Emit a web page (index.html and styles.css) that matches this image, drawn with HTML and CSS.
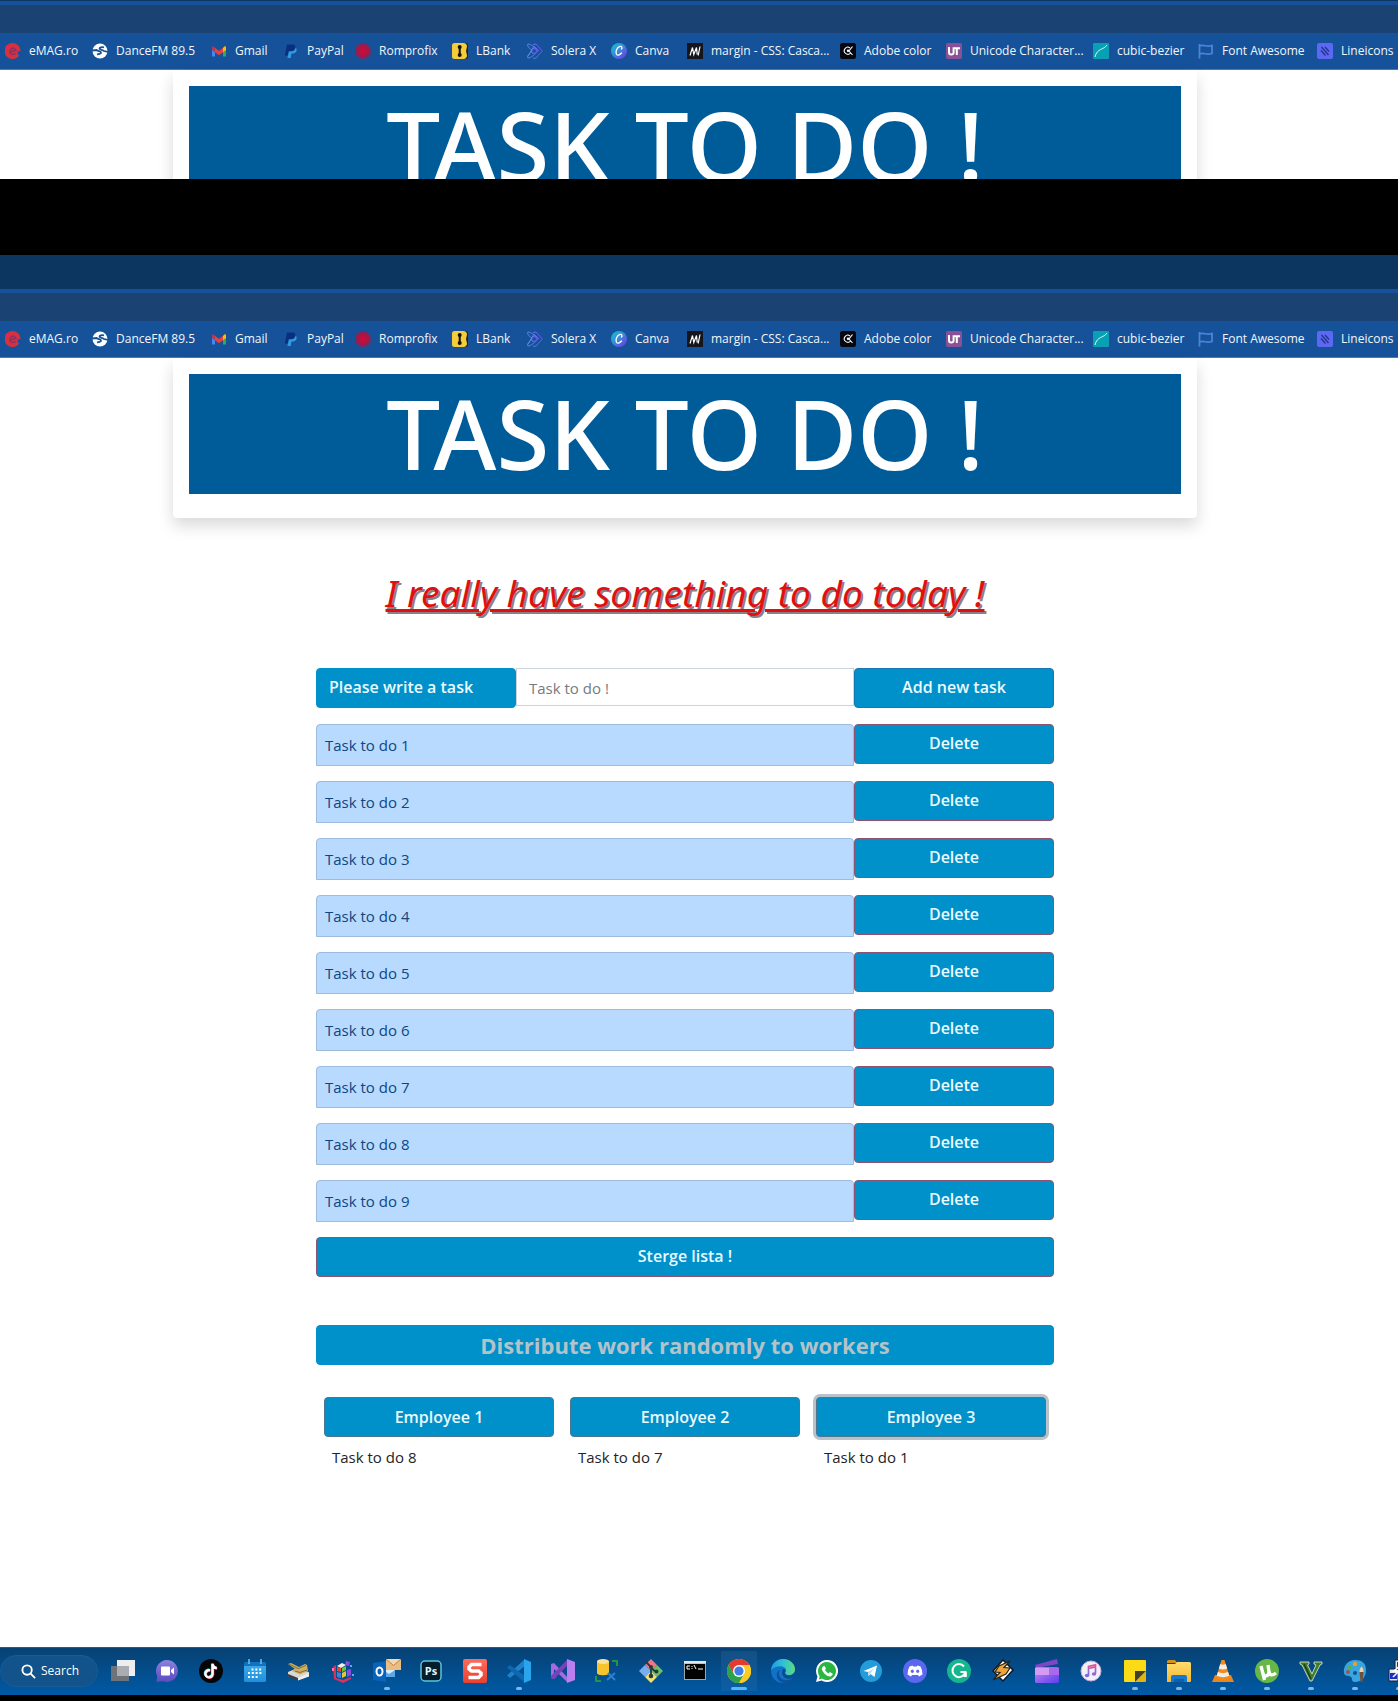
FILE: index.html
```html
<!DOCTYPE html>
<html lang="en">
<head>
<meta charset="utf-8">
<title>Task to do</title>
<meta name="viewport" content="width=device-width, initial-scale=1">
<link rel="stylesheet" href="styles.css">
</head>
<body>
<svg class="sprite" aria-hidden="true">
  <defs>
    <linearGradient id="gCanva" x1="0" y1="0" x2="1" y2="1"><stop offset="0" stop-color="#12c6cf"/><stop offset=".5" stop-color="#3c86dc"/><stop offset="1" stop-color="#7a2de0"/></linearGradient>
    <radialGradient id="gRom"><stop offset="0" stop-color="#d00a3a"/><stop offset=".6" stop-color="#ab1545"/><stop offset="1" stop-color="#6f2c62"/></radialGradient>
    <linearGradient id="gSol"><stop offset="0" stop-color="#5a8be0"/><stop offset="1" stop-color="#6a55f0"/></linearGradient>
    <linearGradient id="gChat" x1="0" y1="0" x2="0" y2="1"><stop offset="0" stop-color="#8d82e0"/><stop offset="1" stop-color="#5a4bc0"/></linearGradient>
    <linearGradient id="gEdge" x1="0" y1="0" x2="1" y2="0"><stop offset="0" stop-color="#1f9be0"/><stop offset=".5" stop-color="#2fc0d8"/><stop offset="1" stop-color="#5fdc78"/></linearGradient>
    <linearGradient id="gClip" x1="0" y1="0" x2="1" y2="1"><stop offset="0" stop-color="#c586f0"/><stop offset="1" stop-color="#5a3ff0"/></linearGradient>
    <linearGradient id="gTunes" x1="0" y1="0" x2="0" y2="1"><stop offset="0" stop-color="#f0508c"/><stop offset="1" stop-color="#5a78f0"/></linearGradient>
    <linearGradient id="gFold" x1="0" y1="0" x2="0" y2="1"><stop offset="0" stop-color="#ffdc6c"/><stop offset="1" stop-color="#f7b733"/></linearGradient>
    <linearGradient id="gCal" x1="0" y1="0" x2="0" y2="1"><stop offset="0" stop-color="#38a8ea"/><stop offset="1" stop-color="#2090dc"/></linearGradient>
    <linearGradient id="gSnag" x1="0" y1="0" x2="0" y2="1"><stop offset="0" stop-color="#ff6a5c"/><stop offset="1" stop-color="#e8402e"/></linearGradient>
  </defs>
  <symbol id="b-emag" viewBox="0 0 16 16"><circle cx="7.500" cy="8" r="8" fill="#d93040"/><path d="M5 9.300 11 7.300C10.300 5.500 8.500 4.800 7 5.500 5 6.400 4.400 8.600 5.300 10.200c1.200 1.800 3.600 1.700 5.400.3" fill="none" stroke="#8a3260" stroke-width="1.500"/><path d="m12.500 8.500 3.500-.5v3.500l-3 .5z" fill="#15529a"/></symbol>
  <symbol id="b-dance" viewBox="0 0 16 16"><circle cx="8" cy="8" r="7.500" fill="#fff"/><path d="M0 7.500 4.500 7C6 8.500 9 8 9 9.500S7 11 5 11.500M16 9l-4-1C11 6.500 7.500 7 7.500 5.600S9.500 4 12 4.300" fill="none" stroke="#14529a" stroke-width="1.800"/></symbol>
  <symbol id="b-gmail" viewBox="0 0 16 16"><path d="M1 4v9.500h3V7z" fill="#4285f4"/><path d="M15 4v9.500h-3V7z" fill="#34a853"/><path d="M1 4.500V7l3 2.300V4.800L2.500 3.200C1.500 3 1 3.700 1 4.500z" fill="#b8384c"/><path d="M4 4.800 8 8l4-3.200v4.500L8 12.300 4 9.300z" fill="#ea4335"/><path d="M12 4.800 13.500 3.200C14.500 3 15 3.700 15 4.500V7l-3 2.300z" fill="#fbbc04"/></symbol>
  <symbol id="b-paypal" viewBox="0 0 16 16"><path d="M5.500 4.500h6c3 0 3 5.500-1 6H8.500L7.700 15H4.500z" fill="#2f9be0"/><path d="M4 1.500h6c3.500 0 3.500 6.500-1.500 6.800H5.800L5 12.500H1.800z" fill="#0b2f80"/></symbol>
  <symbol id="b-rom" viewBox="0 0 16 16"><circle cx="8" cy="8" r="8" fill="url(#gRom)"/></symbol>
  <symbol id="b-lbank" viewBox="0 0 16 16"><rect x="2.500" width="13.500" height="16" rx="2.500" fill="#2a2418"/><path d="M2.500 0h9c2 0 3.500 1.500 3.500 3.500L14 8l1 4.500c0 2-1.500 3.500-3.500 3.500h-9A2.500 2.500 0 0 1 0 13.500v-11A2.500 2.500 0 0 1 2.500 0z" fill="#f5cd3c"/><path d="M7.700 4v8" stroke="#14110a" stroke-width="2"/><circle cx="7.700" cy="4" r="2" fill="#14110a"/><circle cx="7.700" cy="12" r="2" fill="#14110a"/></symbol>
  <symbol id="b-solera" viewBox="0 0 16 16"><g fill="none" stroke="url(#gSol)" stroke-width="1"><path d="M6 1.500 9 1l6.300 7L9 15.200H6M1 1c4 0 10 7 10 7s-6 7-10 7c-2-2 4-6 4-7S-1 3 1 1zM1 13l6-10 5 5"/><circle cx="7" cy="8" r="2.500"/></g></symbol>
  <symbol id="b-canva" viewBox="0 0 16 16"><circle cx="8" cy="8" r="8" fill="url(#gCanva)"/><path d="M10.500 6c1.200-1.500.2-3-1.500-2.600C6 4.300 4 9 5.500 11.300c1.300 1.700 3.600.5 5-1.300" fill="none" stroke="#fff" stroke-width="1.300" stroke-linecap="round"/></symbol>
  <symbol id="b-mdn" viewBox="0 0 16 16"><path d="M0 0h16v16H0z" fill="#15151c"/><path d="M3 12.500 5.500 4.500l1.300 7 2.700-7 .7 7M13 3.500l-1.800 9" fill="none" stroke="#fff" stroke-width="1.200"/></symbol>
  <symbol id="b-adobe" viewBox="0 0 16 16"><rect width="16" height="16" rx="2.500" fill="#06070f"/><path d="M12.500 3.500 9 8l3.500 4M10.500 10A3.500 3.500 0 1 1 10 5" fill="none" stroke="#fff" stroke-width="1.100"/><circle cx="8" cy="7.800" r="1.200" fill="#fff"/></symbol>
  <symbol id="b-ut" viewBox="0 0 16 16"><rect width="16" height="16" rx="2" fill="#8a5296"/><path d="M3 4v5.500Q3 11.500 5.300 11.500T7.600 9.500V5.200H14M10.800 5v7" fill="none" stroke="#fff" stroke-width="2"/></symbol>
  <symbol id="b-cubic" viewBox="0 0 16 16"><rect width="16" height="16" rx="1" fill="#0aa0b4"/><path d="M2 14C4 5 11 7 14 2" fill="none" stroke="#d8f8fa" stroke-width="1"/></symbol>
  <symbol id="b-fa" viewBox="0 0 16 16"><path d="M1.500 1v14.500M1.500 3c5-2 6 1.500 12.500-.5v8C8 12.500 6.500 9 1.500 11" fill="none" stroke="#4a86dc" stroke-width="1.700"/></symbol>
  <symbol id="b-line" viewBox="0 0 16 16"><rect width="16" height="16" rx="2" fill="#5a68f2"/><path d="m4 7.500 4.500 5M4.500 4l7 8M8 4l4 4.500" stroke="#25338f" stroke-width="1.300"/></symbol>

  <symbol id="t-view" viewBox="0 0 24 24"><path d="M6 1h18v16H6z" fill="#eceef0"/><path d="M0 7h18v15H0z" fill="#6f7378"/><path d="M6 7h12v10H6z" fill="#a9acb0"/></symbol>
  <symbol id="t-chat" viewBox="0 0 24 24"><path d="M12 1a11 11 0 1 1-4 21.300L1.500 23l.7-6A11 11 0 0 1 12 1z" fill="url(#gChat)"/><rect x="6" y="7.500" width="9" height="9" rx="1" fill="#fff"/><path d="m16 11 3-2.500v7L16 13z" fill="#fff"/></symbol>
  <symbol id="t-tiktok" viewBox="0 0 24 24"><circle cx="12" cy="12" r="12" fill="#050505"/><g fill="none" stroke-width="2.400"><path d="M10.500 10.800a3.600 3.600 0 1 0 2.600 3.700V4.500c.3 2.500 2 4 4.200 4" stroke="#25e0e0"/><path d="M11.500 11.800a3.600 3.600 0 1 0 2.600 3.700V5.500c.3 2.500 2 4 4.200 4" stroke="#f02c56"/><path d="M11 11.300a3.600 3.600 0 1 0 2.600 3.700V5c.3 2.500 2 4 4.200 4" stroke="#fff"/></g></symbol>
  <symbol id="t-cal" viewBox="0 0 24 24"><path d="M1 4.500Q1 3 2.500 3h19Q23 3 23 4.500V7H1z" fill="#1471bd"/><path d="M1 7h22v14.500q0 1.500-1.500 1.500h-19Q1 23 1 21.500z" fill="url(#gCal)"/><path d="M6 0v5M18 0v5" stroke="#63c5f5" stroke-width="1.500"/><path d="M8.500 10.500h11M5 14h14.500M5 18h11" stroke="#fff" stroke-width="2" stroke-dasharray="2 1.800"/></symbol>
  <symbol id="t-scan" viewBox="0 0 24 24"><path d="m1 13 7-3 14 3v4l-11 4-10-4z" fill="#d9d8d4"/><path d="m1 15 10 4v2.500l-10-4z" fill="#3b3f45"/><path d="m11 19 11-5v3.500l-11 4z" fill="#f0efeb"/><path d="m1 5 3-1 8 4 6-3 2 1 1 6-8 3.500L5 12l3-2z" fill="#cdaf68"/><path d="m2 5 9 4.500 8-3M8 12l5 1.500 7-2.500" fill="none" stroke="#8c6d2e"/></symbol>
  <symbol id="t-cube" viewBox="0 0 24 24"><path d="m2 8 3-2v13l7 2 8-3v2l-8 4-9-4z" fill="#d8335f"/><path d="m6 7 5-3 4 2-5 3z" fill="#f4efe6"/><path d="m6 8 4 1v4l-4-1z" fill="#e04a3a"/><path d="m11 9 4-2v4l-4 2z" fill="#65c43d"/><path d="m6 13 4 1v5l-4-1z" fill="#3f7fe0"/><path d="m11 14 4-2v5l-4 2z" fill="#f2c422"/><path d="m16 11 4-1v6l-4 2z" fill="#8b4be0"/><path d="m15 2 4 1-1 4-4-1z" fill="#8a4be5"/><path d="M1 9h2v3H1z" fill="#ff7a9a"/><path d="M19 6h2v2h-2zM21 15h2v2h-2z" fill="#5ca8ff"/></symbol>
  <symbol id="t-outlook" viewBox="0 0 28 24"><path d="M10 6h12v12H10z" fill="#dfecf8"/><path d="m10 11 6 4 6-4v7H10z" fill="#58a7e8"/><path d="M0 4 13 2v21L0 21z" fill="#0a63bb"/><ellipse cx="6.500" cy="12.500" rx="3" ry="4" fill="none" stroke="#fff" stroke-width="2"/><path d="M13 0h15v11H13z" fill="#e9bd83"/><path d="m13 0 7.500 6.500L28 0" fill="#f6d7a9" stroke="#b98245"/></symbol>
  <symbol id="t-ps" viewBox="0 0 24 24"><rect x="2" y="2" width="20" height="20" rx="4" fill="#061e2b" stroke="#5cc5dc" stroke-width="1.500"/><text x="12" y="16" class="ps-text">Ps</text></symbol>
  <symbol id="t-snag" viewBox="0 0 24 24"><rect width="24" height="24" rx="2" fill="url(#gSnag)"/><path d="M18.500 5.500H8.500L6 8v2l2.500 2h7l2.500 2v2l-2.500 2.500H5.500" fill="none" stroke="#fff" stroke-width="3.500"/></symbol>
  <symbol id="t-code" viewBox="0 0 24 24"><path d="M18 0v7L3 19l-3-2.500z" fill="#1d83cb"/><path d="M18 24v-7L3 6 0 8.500z" fill="#0d68ae"/><path d="m17 0 7 3v18l-7 3z" fill="#2ba4ee"/></symbol>
  <symbol id="t-vs" viewBox="0 0 24 24"><path d="m0 5 3-1 14 15v5L3 10v6l2 2-2 2-3-1z" fill="#a76ae0"/><path d="M17 0v6L3 20l-3-1v-2z" fill="#7a41ba"/><path d="m16 0 8 3v18l-8 3z" fill="#b97ff0"/></symbol>
  <symbol id="t-db" viewBox="0 0 24 24"><path d="M2 2v12c0 3 12 3 12 0V2z" fill="#f6c52d"/><ellipse cx="8" cy="2.500" rx="6" ry="2.500" fill="#fbe29a"/><path d="M17 2h5v5M1 17v5h5" fill="none" stroke="#279444" stroke-width="2"/><path d="m12 21 8-7M13 14l7 7" stroke="#2c80ce" stroke-width="2"/></symbol>
  <symbol id="t-git" viewBox="0 0 24 24"><path d="m12 0 6 6-6 6-6-6z" fill="#ec7982"/><path d="m6 6 6 6-6 6-6-6z" fill="#76aef0"/><path d="m18 6 6 6-6 6-6-6z" fill="#73bf68"/><path d="m12 12 6 6-6 6-6-6z" fill="#f4e06f"/><path d="m7 3 5 5v9M12 9l5 4" fill="none" stroke="#253b42" stroke-width="1.800"/><circle cx="12" cy="8" r="2" fill="#253b42"/><circle cx="12" cy="17" r="2.300" fill="#253b42"/><circle cx="17.500" cy="12.500" r="2" fill="#253b42"/></symbol>
  <symbol id="t-cmd" viewBox="0 0 24 24"><path d="M1 2h22v19H1z" fill="#9aa5ad"/><path d="M2 5h20v15H2z" fill="#030303"/><path d="M1 2h22v2.500H1z" fill="#e4e7e9"/><path d="M7 7H4v3h3M9 7v1M9 9v1M11 6l2 4M15 10h5" fill="none" stroke="#fff"/></symbol>
  <symbol id="t-chrome" viewBox="0 0 24 24"><circle cx="12" cy="12" r="12" fill="#f7c91f"/><path d="M1.600 6A12 12 0 0 1 22.400 6H12l-5.200 9z" fill="#e33b2e"/><path d="M1.600 6A12 12 0 0 0 12 24l5.200-9H6.800z" fill="#2ba24c"/><path d="M12 6h10.400A12 12 0 0 1 12 24l5.200-9z" fill="#fbcb21"/><circle cx="12" cy="12" r="6" fill="#fff"/><circle cx="12" cy="12" r="4.600" fill="#3d7de8"/></symbol>
  <symbol id="t-edge" viewBox="0 0 24 24"><circle cx="12" cy="12" r="12" fill="#1272c8"/><path d="M0 11C1 4 6 0 12 0c7 0 12 5 12 10 0 4-3 6-6 6-4 0-5-2-3.500-3.500C17 8 8 4 0 11z" fill="url(#gEdge)"/><path d="M9 11c-3 4 0 10 6 10 3 0 5-1 7-2-3 5-8 6-12 4-5-3-6-10-1-12z" fill="#0d519b"/><path d="M14.500 12.500C13 15 16 17 18 16.500c3 0 5-2 6-4 .3 3-1 5-2 6.500-8 3-13-3-10-9 2 0 3 1 2.500 2.500z" fill="#084e8b"/></symbol>
  <symbol id="t-wa" viewBox="0 0 24 24"><path d="M12 1a11 11 0 1 1-5.500 20.500L1 23l1.500-5.500A11 11 0 0 1 12 1z" fill="#fff"/><path d="M12 3a9 9 0 1 1-5 16.500l-3.200 1 .9-3.200A9 9 0 0 1 12 3z" fill="#29b741"/><path d="m8.500 7-1.700 2c0 4 5 9 9 8.500L18 15l-3-2-1.500 1.500Q11 13 10 10.800L11 9.500 9.500 7z" fill="#fff"/></symbol>
  <symbol id="t-tg" viewBox="0 0 24 24"><circle cx="12" cy="12" r="11" fill="#259cda"/><path d="m4.500 12 13.500-5.500L15.500 18l-4-3-2 2-.5-4z" fill="#fff"/><path d="m9 13 6.500-4-4 5-2 3z" fill="#b6d9ec"/></symbol>
  <symbol id="t-disc" viewBox="0 0 24 24"><circle cx="12" cy="12" r="12" fill="#5c67f0"/><path d="m6.500 7.500 3-1 .7 1h3.600l.7-1 3 1q2 3.500 2 8l-3.500 2-1-1.500H9L8 17.500l-3.500-2q0-4.500 2-8z" fill="#fff"/><ellipse cx="9.300" cy="12.300" rx="1.500" ry="1.800" fill="#5c67f0"/><ellipse cx="14.700" cy="12.300" rx="1.500" ry="1.800" fill="#5c67f0"/></symbol>
  <symbol id="t-gram" viewBox="0 0 24 24"><circle cx="12" cy="12" r="12" fill="#15b58e"/><path d="M17 7.500A6.500 6.500 0 1 0 18.300 13H13.500M16.500 17h2.300v-4" fill="none" stroke="#fff" stroke-width="2"/></symbol>
  <symbol id="t-winamp" viewBox="0 0 24 24"><path d="m12 1 10 10-10 11L2 12z" fill="#fff" stroke="#16191c" stroke-width="1.500"/><path d="M19 2 8 7l-4 6 5 .5L2 21l13-6 4-6-6-.5z" fill="#eba637" stroke="#272219" stroke-width="1.200"/></symbol>
  <symbol id="t-clip" viewBox="0 0 24 24"><path d="m0 6 22-6 1 5L1 9z" fill="#7f45c8"/><rect y="8" width="24" height="16" rx="1.500" fill="url(#gClip)"/><path d="M0 9h14v7H0z" fill="#d59af2"/><path d="M14 9h10v7H14z" fill="#a869ed"/></symbol>
  <symbol id="t-tunes" viewBox="0 0 24 24"><circle cx="12" cy="12" r="10" fill="#f4eef8" stroke="#c6aedc"/><path d="M9.500 16V7.500l7-1.700v8.700M9.500 9.500l7-1.700" fill="none" stroke="url(#gTunes)" stroke-width="1.700"/><ellipse cx="8" cy="16.500" rx="2.200" ry="1.800" fill="#6c70e8"/><ellipse cx="15" cy="15" rx="2.200" ry="1.800" fill="#8a68dc"/></symbol>
  <symbol id="t-note" viewBox="0 0 24 24"><path d="M2 1h20q1 0 1 1v10L12 23H2q-1 0-1-1V2q0-1 1-1z" fill="#fbdb16"/><path d="M12 12h11L12 23z" fill="#40402f"/><path d="M23 12v10q0 1-1 1H12z" fill="#e6b40d"/></symbol>
  <symbol id="t-folder" viewBox="0 0 24 24"><path d="M0 2.500Q0 1 1.500 1H8l2 3H0z" fill="#d49314"/><path d="M0 5h8l2-2h12.500Q24 3 24 4.500V22q0 1-1 1H0z" fill="url(#gFold)"/><path d="M4 23v-5q0-2 2-2h12q2 0 2 2v5z" fill="#1678cd"/><path d="M7 20h10v3H7z" fill="#0f5fae"/></symbol>
  <symbol id="t-vlc" viewBox="0 0 24 24"><path d="M4 16h16l3 7H1z" fill="#ed851b"/><path d="M10.500 1h3L19 19Q12 23 5 19z" fill="#f28a1d"/><path d="m9.300 5-1.500 4.500q4 2 8.400 0L14.700 5q-3 1.300-5.400 0zM6.900 13l-1.200 3.800q6.300 2.800 12.600 0L17.100 13q-5 2.300-10.200 0z" fill="#f1eee8"/></symbol>
  <symbol id="t-mu" viewBox="0 0 24 24"><circle cx="12" cy="12" r="12" fill="#67b746"/><path d="m6 7 3.500 14M8 14c1 5 6 3 6-1l-1-7M14 13c1 3.500 3 4 7 1" fill="none" stroke="#fff" stroke-width="3.300"/></symbol>
  <symbol id="t-v" viewBox="0 0 24 24"><path d="M1 3h9v2L8.500 6 13 15l4-9-2-1V3h8v2l-2 1-8 16h-2L3 6 1 5z" fill="#3f7d2a" stroke="#c9d2c2" stroke-width="1"/><path d="m5 5 7 15" stroke="#16401c" stroke-width="1.500"/></symbol>
  <symbol id="t-paint" viewBox="0 0 24 24"><path d="M12 1C4 1 0 8 1 14c1 4 5 2 7 4s0 5 4 5c7 0 11-5 11-12S19 1 12 1z" fill="#38a5df"/><circle cx="12" cy="5" r="2.200" fill="#e0a13a"/><circle cx="7" cy="8" r="2.200" fill="#5cae4a"/><circle cx="5" cy="13" r="2" fill="#a5524a"/><circle cx="12" cy="14" r="2" fill="#12508f"/><path d="M16.500 13q0-4 2-5.500 2 1.500 2 5.500z" fill="#ead2ac"/><path d="M16.500 13h4l-1 10h-2z" fill="#71513a"/></symbol>
  <symbol id="t-pc" viewBox="0 0 24 24"><path d="M8 1h15v13H8z" fill="#e5e5e5" stroke="#171d3f"/><path d="M10 3h11v8H10z" fill="#1930bd"/><path d="M2 10h9v12H2z" fill="#e5e5e5" stroke="#171d3f"/><path d="M3 14h7v6H3z" fill="#1930bd"/><path d="m14 6-7 6h5l-6 6" fill="none" stroke="#fff" stroke-width="1.500"/></symbol>
</svg>

<div class="capture capture-cut">
  <div class="tabs tabs-cut"></div>
  <div class="address"></div>
  <nav class="bookmarks" aria-label="Bookmarks, first window">
    <a href="#"><svg><use href="#b-emag"/></svg>eMAG.ro</a>
    <a href="#"><svg><use href="#b-dance"/></svg>DanceFM 89.5</a>
    <a href="#"><svg><use href="#b-gmail"/></svg>Gmail</a>
    <a href="#"><svg><use href="#b-paypal"/></svg>PayPal</a>
    <a href="#"><svg><use href="#b-rom"/></svg>Romprofix</a>
    <a href="#"><svg><use href="#b-lbank"/></svg>LBank</a>
    <a href="#"><svg><use href="#b-solera"/></svg>Solera X</a>
    <a href="#"><svg><use href="#b-canva"/></svg>Canva</a>
    <a href="#"><svg><use href="#b-mdn"/></svg>margin - CSS: Casca...</a>
    <a href="#"><svg><use href="#b-adobe"/></svg>Adobe color</a>
    <a href="#"><svg><use href="#b-ut"/></svg>Unicode Character...</a>
    <a href="#"><svg><use href="#b-cubic"/></svg>cubic-bezier</a>
    <a href="#"><svg><use href="#b-fa"/></svg>Font Awesome</a>
    <a href="#"><svg><use href="#b-line"/></svg>Lineicons</a>
  </nav>
  <div class="page">
    <header class="banner"><h1>TASK TO DO !</h1></header>
  </div>
</div>

<div class="capture capture-full">
  <div class="tabs"></div>
  <div class="address"></div>
  <nav class="bookmarks" aria-label="Bookmarks, second window">
    <a href="#"><svg><use href="#b-emag"/></svg>eMAG.ro</a>
    <a href="#"><svg><use href="#b-dance"/></svg>DanceFM 89.5</a>
    <a href="#"><svg><use href="#b-gmail"/></svg>Gmail</a>
    <a href="#"><svg><use href="#b-paypal"/></svg>PayPal</a>
    <a href="#"><svg><use href="#b-rom"/></svg>Romprofix</a>
    <a href="#"><svg><use href="#b-lbank"/></svg>LBank</a>
    <a href="#"><svg><use href="#b-solera"/></svg>Solera X</a>
    <a href="#"><svg><use href="#b-canva"/></svg>Canva</a>
    <a href="#"><svg><use href="#b-mdn"/></svg>margin - CSS: Casca...</a>
    <a href="#"><svg><use href="#b-adobe"/></svg>Adobe color</a>
    <a href="#"><svg><use href="#b-ut"/></svg>Unicode Character...</a>
    <a href="#"><svg><use href="#b-cubic"/></svg>cubic-bezier</a>
    <a href="#"><svg><use href="#b-fa"/></svg>Font Awesome</a>
    <a href="#"><svg><use href="#b-line"/></svg>Lineicons</a>
  </nav>
  <main class="page">
    <header class="banner"><h1>TASK TO DO !</h1></header>
    <h2 class="tagline">I really have something to do today !</h2>
    <div class="board">
      <form class="row entry">
        <label class="prompt" for="task">Please write a task</label>
        <input class="field" id="task" type="text" placeholder="Task to do !">
        <button class="btn btn-add" type="button">Add new task</button>
      </form>
      <ul class="tasks">
        <li class="row"><span class="task">Task to do 1</span><button class="btn btn-danger" type="button">Delete</button></li>
        <li class="row"><span class="task">Task to do 2</span><button class="btn btn-danger" type="button">Delete</button></li>
        <li class="row"><span class="task">Task to do 3</span><button class="btn btn-danger" type="button">Delete</button></li>
        <li class="row"><span class="task">Task to do 4</span><button class="btn btn-danger" type="button">Delete</button></li>
        <li class="row"><span class="task">Task to do 5</span><button class="btn btn-danger" type="button">Delete</button></li>
        <li class="row"><span class="task">Task to do 6</span><button class="btn btn-danger" type="button">Delete</button></li>
        <li class="row"><span class="task">Task to do 7</span><button class="btn btn-danger" type="button">Delete</button></li>
        <li class="row"><span class="task">Task to do 8</span><button class="btn btn-danger" type="button">Delete</button></li>
        <li class="row"><span class="task">Task to do 9</span><button class="btn btn-danger" type="button">Delete</button></li>
      </ul>
      <button class="btn btn-danger" type="button">Sterge lista !</button>
      <button class="btn btn-share" type="button">Distribute work randomly to workers</button>
      <div class="workers">
        <div class="worker"><button class="btn btn-worker" type="button">Employee 1</button><p>Task to do 8</p></div>
        <div class="worker"><button class="btn btn-worker" type="button">Employee 2</button><p>Task to do 7</p></div>
        <div class="worker"><button class="btn btn-worker is-focused" type="button">Employee 3</button><p>Task to do 1</p></div>
      </div>
    </div>
  </main>
  <footer class="taskbar">
    <button class="search" type="button"><svg viewBox="0 0 16 16"><circle cx="6.500" cy="6.500" r="5"/><path d="m10 10 5 5"/></svg>Search</button>
    <button class="app" type="button" aria-label="Task view"><svg><use href="#t-view"/></svg></button>
    <button class="app" type="button" aria-label="Chat"><svg><use href="#t-chat"/></svg></button>
    <button class="app" type="button" aria-label="TikTok"><svg><use href="#t-tiktok"/></svg></button>
    <button class="app" type="button" aria-label="Calendar"><svg><use href="#t-cal"/></svg></button>
    <button class="app" type="button" aria-label="Scanner"><svg><use href="#t-scan"/></svg></button>
    <button class="app" type="button" aria-label="Archive"><svg><use href="#t-cube"/></svg></button>
    <button class="app open" type="button" aria-label="Outlook"><svg class="wide"><use href="#t-outlook"/></svg></button>
    <button class="app" type="button" aria-label="Photoshop"><svg><use href="#t-ps"/></svg></button>
    <button class="app" type="button" aria-label="Snagit"><svg><use href="#t-snag"/></svg></button>
    <button class="app open" type="button" aria-label="VS Code"><svg><use href="#t-code"/></svg></button>
    <button class="app" type="button" aria-label="Visual Studio"><svg><use href="#t-vs"/></svg></button>
    <button class="app" type="button" aria-label="Database tools"><svg><use href="#t-db"/></svg></button>
    <button class="app" type="button" aria-label="Git"><svg><use href="#t-git"/></svg></button>
    <button class="app" type="button" aria-label="Command prompt"><svg><use href="#t-cmd"/></svg></button>
    <button class="app open active" type="button" aria-label="Chrome"><svg><use href="#t-chrome"/></svg></button>
    <button class="app" type="button" aria-label="Edge"><svg><use href="#t-edge"/></svg></button>
    <button class="app" type="button" aria-label="WhatsApp"><svg><use href="#t-wa"/></svg></button>
    <button class="app" type="button" aria-label="Telegram"><svg><use href="#t-tg"/></svg></button>
    <button class="app" type="button" aria-label="Discord"><svg><use href="#t-disc"/></svg></button>
    <button class="app" type="button" aria-label="Grammarly"><svg><use href="#t-gram"/></svg></button>
    <button class="app" type="button" aria-label="Winamp"><svg><use href="#t-winamp"/></svg></button>
    <button class="app" type="button" aria-label="Clipchamp"><svg><use href="#t-clip"/></svg></button>
    <button class="app" type="button" aria-label="iTunes"><svg><use href="#t-tunes"/></svg></button>
    <button class="app open" type="button" aria-label="Sticky notes"><svg><use href="#t-note"/></svg></button>
    <button class="app open" type="button" aria-label="File Explorer"><svg><use href="#t-folder"/></svg></button>
    <button class="app open" type="button" aria-label="VLC"><svg><use href="#t-vlc"/></svg></button>
    <button class="app open" type="button" aria-label="uTorrent"><svg><use href="#t-mu"/></svg></button>
    <button class="app open" type="button" aria-label="Vim"><svg><use href="#t-v"/></svg></button>
    <button class="app open" type="button" aria-label="Paint"><svg><use href="#t-paint"/></svg></button>
    <button class="app open" type="button" aria-label="PuTTY"><svg><use href="#t-pc"/></svg></button>
  </footer>
</div>
</body>
</html>
```
FILE: styles.css
```css
* { box-sizing: border-box; }

body {
  display: flex;
  flex-direction: column;
  gap: 76px;
  min-height: 100vh;
  margin: 0;
  padding-bottom: 6px;
  background: #000;
  color: #212529;
  font: 15px/24px "Open Sans", sans-serif;
}

h1, h2, p, ul { margin: 0; padding: 0; }
button, input { font: inherit; margin: 0; }

.sprite { position: absolute; width: 0; height: 0; }

/* Browser windows */
.capture { display: flex; flex-direction: column; overflow: hidden; background: #fff; }
.capture-cut { flex: none; height: 179px; }
.capture-full { flex: 1; }

.tabs { flex: none; height: 34px; background: #0c3560; }
.tabs-cut { height: 1px; }
.address { flex: none; height: 32px; border-top: 4px solid #15529b; background: #1a4373; }

.bookmarks {
  flex: none;
  display: grid;
  grid-template-columns: 87fr 119fr 72fr 72fr 97fr 75fr 84fr 76fr 153fr 106fr 147fr 105fr 119fr 81fr;
  align-items: center;
  height: 37px;
  padding-left: 5px;
  border-bottom: 1px solid #57799c;
  background: #15529a;
}
.bookmarks a {
  display: flex;
  align-items: center;
  gap: 8px;
  min-width: 0;
  color: #f2f6fb;
  font-size: 12px;
  line-height: 16px;
  text-decoration: none;
  white-space: nowrap;
}
.bookmarks svg { flex: none; width: 16px; height: 16px; }

/* Page */
.page { flex: 1; padding: 0 28px 48px 0; }

.banner {
  max-width: 1024px;
  margin: 0 auto;
  padding: 16px 16px 24px;
  border-radius: 4px;
  background: #fff;
  box-shadow: 0 8px 16px rgba(0, 0, 0, .15);
}
.banner h1 {
  height: 120px;
  background: #005b99;
  color: #fff;
  font: 500 96px/118px "Noto Sans", sans-serif;
  text-align: center;
}

.tagline {
  margin: 48px 0;
  color: #e01010;
  font: italic 400 37px/54px "Noto Sans", sans-serif;
  text-align: center;
  text-decoration: underline 3px;
  text-shadow: 2px 2px 0 #8c8088;
}

.board { max-width: 738px; margin: 0 auto; }
.row { display: flex; align-items: flex-start; margin-bottom: 15px; }
.entry { margin-bottom: 16px; }

.prompt, .btn {
  border: 1px solid #0090ca;
  border-radius: 4px;
  background: #0090ca;
  color: #e9fbff;
  font: 600 16px/22px "Open Sans", sans-serif;
}
.prompt { flex: none; width: 200px; height: 40px; padding: 7px 12px; }
.field {
  flex: 1;
  min-width: 0;
  height: 38px;
  padding: 7px 12px 5px;
  border: 1px solid #ced4da;
  color: #212529;
}
.field::placeholder { color: #747b82; opacity: 1; }

.btn { display: block; width: 100%; height: 40px; padding: 0 12px 2px; text-align: center; }
.row .btn { flex: none; width: 200px; }
.btn-add { border-color: #1577b4; }
.btn-danger { border-color: #8c5470; }

.tasks { list-style: none; }
.task {
  flex: 1;
  height: 42px;
  padding: 8px;
  border: 1px solid #9dbcdd;
  border-radius: 4px 4px 0 0;
  background: #b8daff;
  color: #0f4681;
}

.btn-share { margin: 48px 0 32px; padding-bottom: 0; color: #b3c3ca; font-size: 22px; font-weight: 700; }

.workers { display: grid; grid-template-columns: repeat(3, 1fr); gap: 16px; padding: 0 8px; }
.worker p { padding: 8px; }
.btn-worker { padding-bottom: 0; border-color: #4c7790; }
.is-focused { box-shadow: 0 0 0 3px #b9c2c8; }

/* Taskbar */
.taskbar {
  flex: none;
  display: flex;
  height: 48px;
  overflow: hidden;
  border-top: 1px solid #2d5876;
  background: linear-gradient(#074173, #005aa6);
}
.search {
  flex: none;
  display: flex;
  align-items: center;
  gap: 5px;
  width: 98px;
  height: 32px;
  margin: 7px 3px 0 0;
  padding: 0 0 0 20px;
  border: 1px solid #175c93;
  border-radius: 16px;
  background: #11538a;
  color: #fff;
  font-size: 12px;
}
.search svg { width: 15px; height: 15px; fill: none; stroke: #fff; stroke-width: 2; }
.app {
  position: relative;
  flex: none;
  display: grid;
  place-items: center;
  width: 44px;
  height: 46px;
  padding: 0;
  border: 0;
  background: none;
}
.app svg { width: 24px; height: 24px; }
.app .wide { width: 28px; }
.open::after {
  content: "";
  position: absolute;
  bottom: 4px;
  left: 19px;
  width: 6px;
  height: 3px;
  border-radius: 2px;
  background: #7fb6e6;
}
.active { background: linear-gradient(#144f84, #0c5ea5) center / 36px 40px no-repeat; }
.active::after { left: 14px; width: 16px; background: #4cbcfa; }
.ps-text { fill: #e4f6fb; font: 700 11px "Open Sans", sans-serif; text-anchor: middle; }
```
